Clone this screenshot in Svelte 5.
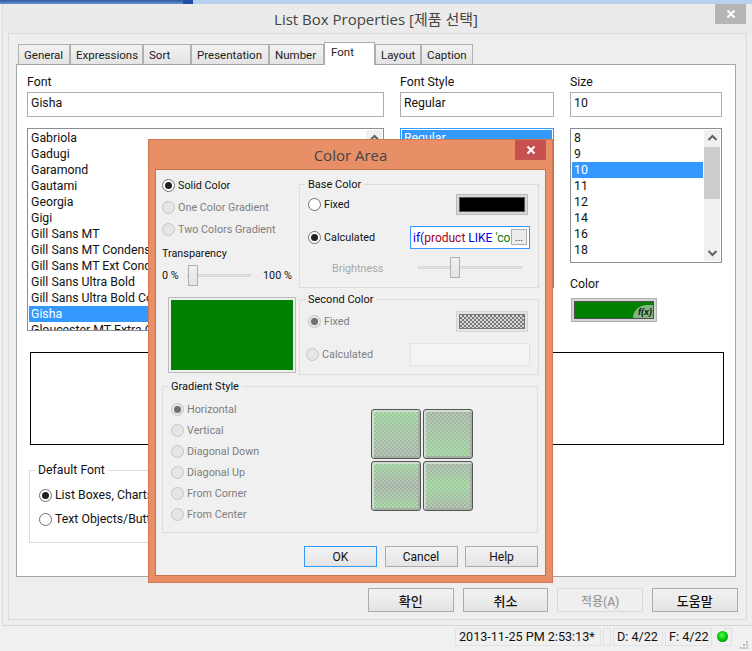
<script>
  const tabs = [
    { label: 'General', w: 52 }, { label: 'Expressions', w: 73 }, { label: 'Sort', w: 48 },
    { label: 'Presentation', w: 78 }, { label: 'Number', w: 55 }, { label: 'Font', w: 51, active: true },
    { label: 'Layout', w: 46 }, { label: 'Caption', w: 52 }
  ];
  const fonts = ['Gabriola','Gadugi','Garamond','Gautami','Georgia','Gigi','Gill Sans MT','Gill Sans MT Condensed','Gill Sans MT Ext Condensed Bold','Gill Sans Ultra Bold','Gill Sans Ultra Bold Condensed','Gisha','Gloucester MT Extra Condensed'];
  const sizes = [8,9,10,11,12,14,16,18];
  const gradients = ['Horizontal','Vertical','Diagonal Down','Diagonal Up','From Corner','From Center'];
</script>

<div class="screen">
  <div class="topstrip"><span class="strip-a"></span><span class="strip-b"></span></div>
  <div class="window">
    <header class="wintitle">
      <span>List Box Properties [제품 선택]</span>
      <button class="winclose" aria-label="Close"><svg width="10" height="10" viewBox="0 0 10 10"><path d="M1.5 1.5l7 7M8.5 1.5l-7 7" stroke="#fff" stroke-width="2"/></svg></button>
    </header>
    <div class="frame">
      <div class="tabs">
        {#each tabs as t}
          <div class="tab" class:active={t.active} style="width:{t.w}px">{t.label}</div>
        {/each}
      </div>
      <div class="panel">
        <div class="fontgrid">
          <div class="col">
            <div class="lbl">Font</div>
            <div class="input">Gisha</div>
            <div class="list fontlist">
              {#each fonts as f}
                <div class="opt" class:sel={f === 'Gisha'}>{f}</div>
              {/each}
              <div class="vscroll"><svg class="chev" width="13" height="8" viewBox="0 0 13 8"><path d="M2.5 6l4-4 4 4" fill="none" stroke="#606060" stroke-width="2"/></svg></div>
            </div>
          </div>
          <div class="col">
            <div class="lbl">Font Style</div>
            <div class="input">Regular</div>
            <div class="list stylelist"><div class="opt sel">Regular</div></div>
          </div>
          <div class="col">
            <div class="lbl">Size</div>
            <div class="input">10</div>
            <div class="list sizelist">
              {#each sizes as s}
                <div class="opt" class:sel={s === 10}>{s}</div>
              {/each}
              <div class="vscroll full">
                <svg class="chev" width="13" height="8" viewBox="0 0 13 8"><path d="M2.5 6l4-4 4 4" fill="none" stroke="#606060" stroke-width="2"/></svg>
                <span class="thumb"></span>
                <svg class="chev bottom" width="13" height="8" viewBox="0 0 13 8"><path d="M2.5 2l4 4 4-4" fill="none" stroke="#606060" stroke-width="2"/></svg>
              </div>
            </div>
            <div class="lbl colorlbl">Color</div>
            <div class="colorbtn"><div class="colorfill"><span class="fx">f(x)</span></div></div>
          </div>
        </div>
        <div class="preview"></div>
        <fieldset class="defaultfont">
          <legend>Default Font</legend>
          <div class="rrow"><span class="radio on"></span>List Boxes, Charts, etc.</div>
          <div class="rrow"><span class="radio"></span>Text Objects/Buttons</div>
        </fieldset>
      </div>
      <div class="actions">
        <button class="kbtn">확인</button>
        <button class="kbtn">취소</button>
        <button class="kbtn off">적용(A)</button>
        <button class="kbtn">도움말</button>
      </div>
    </div>
  </div>
  <footer class="status">
    <div class="cell time">2013-11-25 PM 2:53:13*</div>
    <div class="cell blank"></div>
    <div class="cell d">D: 4/22</div>
    <div class="cell f">F: 4/22</div>
    <div class="cell blank2"></div>
    <div class="led"></div>
    <svg class="grip" width="10" height="10" viewBox="0 0 10 10"><g fill="#bdbdbd"><rect x="7" y="1" width="2" height="2"/><rect x="4" y="4" width="2" height="2"/><rect x="7" y="4" width="2" height="2"/><rect x="1" y="7" width="2" height="2"/><rect x="4" y="7" width="2" height="2"/><rect x="7" y="7" width="2" height="2"/></g></svg>
  </footer>

  <section class="dialog">
    <header class="dtitle">
      <span>Color Area</span>
      <button class="dclose" aria-label="Close"><svg width="10" height="10" viewBox="0 0 10 10"><path d="M1.5 1.5l7 7M8.5 1.5l-7 7" stroke="#fff" stroke-width="2"/></svg></button>
    </header>
    <div class="client">
      <div class="upper">
        <div class="leftcol">
          <div class="drow"><span class="radio on"></span>Solid Color</div>
          <div class="drow dim"><span class="radio dis"></span>One Color Gradient</div>
          <div class="drow dim"><span class="radio dis"></span>Two Colors Gradient</div>
          <div class="translbl">Transparency</div>
          <div class="transrow">
            <span class="zero">0 %</span>
            <div class="slider small"><i></i></div>
            <span class="hundred">100 %</span>
          </div>
          <div class="bigcolor"><div></div></div>
        </div>
        <div class="rightcol">
          <fieldset class="grp base">
            <legend>Base Color</legend>
            <div class="bc-row first">
              <div class="rrow2"><span class="radio"></span>Fixed</div>
              <div class="swatch black"><div></div></div>
            </div>
            <div class="bc-row second">
              <div class="rrow2"><span class="radio on"></span>Calculated</div>
              <div class="expr"><span class="clip"><b class="bl">if(</b><b class="re">product</b> <b class="bl">LIKE</b> <b class="gr">'co</b></span><span class="dots">...</span></div>
            </div>
            <div class="bc-row third">
              <span class="bright">Brightness</span>
              <div class="slider wide"><i></i></div>
            </div>
          </fieldset>
          <fieldset class="grp second-c">
            <legend>Second Color</legend>
            <div class="bc-row first2">
              <div class="rrow2 dim"><span class="radio disdot"></span>Fixed</div>
              <div class="swatch checker"><div></div></div>
            </div>
            <div class="bc-row second2">
              <div class="rrow2 dim left2"><span class="radio dis"></span>Calculated</div>
              <div class="expr disabled"></div>
            </div>
          </fieldset>
        </div>
      </div>
      <fieldset class="grp gradient">
        <legend>Gradient Style</legend>
        <div class="gradbody">
          <div class="gradlist">
            {#each gradients as g, i}
              <div class="grow dim"><span class="radio {i === 0 ? 'disdot' : 'dis'}"></span>{g}</div>
            {/each}
          </div>
          <div class="tiles">
            <div class="tile t1"></div><div class="tile t2"></div>
            <div class="tile t3"></div><div class="tile t4"></div>
          </div>
        </div>
      </fieldset>
      <div class="dactions">
        <button class="dbtn def">OK</button>
        <button class="dbtn">Cancel</button>
        <button class="dbtn">Help</button>
      </div>
    </div>
  </section>
</div>

<style>
  :global(body) { margin: 0; background: #f0f0f0; }
  * { box-sizing: border-box; }
  .screen { position: relative; width: 752px; height: 651px; overflow: hidden; background: #efefef;
    font-family: Roboto, "Noto Sans CJK KR", sans-serif; font-size: 12px; color: #111; }
  button { font: inherit; color: inherit; padding: 0; }

  .topstrip { height: 4px; background: #b9d1f1; display: flex; }
  .strip-a { width: 183px; background: linear-gradient(#2a5aa0, #6d93c9); }
  .strip-b { width: 10px; background: #1f4fa8; }

  .window { height: 622px; margin-left: 2px; background: #eeeeee; border-left: 1px solid #dcdcdc; border-bottom: 1px solid #d6d6d6; }
  .wintitle { height: 29px; position: relative; display: flex; justify-content: center; align-items: center;
    font-family: "Open Sans", "Noto Sans CJK KR", sans-serif; font-size: 15px; color: #444; padding-right: 3px; background: #ebebeb; }
  .winclose { position: absolute; right: 6px; top: 0; width: 31px; height: 20px; background: #b5b5b5; border: 0; display: grid; place-items: center; }

  .frame { margin-left: 5px; margin-right: 5px; height: 587px; border: 1px solid #dadada; padding: 9px 0 0 7px; background: #eeeeee; }
  .tabs { display: flex; height: 22px; align-items: flex-end; padding-left: 2px; position: relative; z-index: 1; margin-bottom: -1px; }
  .tab { height: 21px; border: 1px solid #b0b0b0; border-bottom-color: #a0a0a0; background: linear-gradient(#f2f2f2, #e3e3e3);
    display: flex; align-items: center; padding-left: 5px; color: #222; font-size: 11.5px; }
  .tab.active { height: 23px; background: #fff; border-color: #ababab; border-bottom: 0; padding-bottom: 4px; padding-left: 6px; }
  .panel { width: 720px; height: 513px; background: #fff; border: 1px solid #a5a5a5; padding: 9px 0 0 10px; }

  .fontgrid { display: grid; grid-template-columns: 357px 154px 152px; column-gap: 16px; height: 261px; }
  .col { display: flex; flex-direction: column; }
  .lbl { height: 18px; line-height: 16px; font-size: 12.3px; }
  .input { height: 25px; border: 1px solid #adadad; padding: 3px 0 0 3px; margin-bottom: 11px; font-size: 12.3px; background: #fff; }
  .list { border: 1px solid #8a8e96; background: #fff; position: relative; overflow: hidden; padding: 1px; }
  .fontlist { height: 203px; }
  .stylelist { height: 160px; border-color: #3399ff; }
  .sizelist { height: 135px; }
  .opt { height: 16px; line-height: 16px; padding-left: 2px; white-space: nowrap; font-size: 12.3px; }
  .opt.sel { background: #3399ff; color: #fff; }
  .sizelist .opt { margin-right: 17px; }
  .vscroll { position: absolute; right: 1px; top: 1px; bottom: 1px; width: 16px; background: #f0f0f0; }
  .thumb { position: absolute; left: 0; right: 0; top: 17px; height: 52px; background: #cdcdcd; }
  .chev { position: absolute; top: 4px; left: 2px; }
  .chev.bottom { top: auto; bottom: 4px; }
  .colorlbl { margin-top: 12px; height: 23px; padding-top: 1px; }
  .colorbtn { width: 86px; height: 24px; margin-left: 1px; border: 1px solid #b0b0b0; background: #d4d4d4; padding: 2px; }
  .colorfill { height: 100%; background: #008000; border: 1px solid #505050; position: relative; overflow: hidden; }
  .fx { position: absolute; right: 0; bottom: -1px; width: 20px; height: 14px; border-top-left-radius: 14px 13px; background: #80b880;
    font: italic bold 9px "Liberation Sans", sans-serif; color: #111; text-align: right; line-height: 14px; padding-right: 1px; }

  .preview { margin: 17px 0 0 3px; width: 694px; height: 93px; border: 1px solid #000; }
  .defaultfont { margin: 17px 0 0 2px; width: 300px; height: 81px; padding: 0 0 0 9px; border: 1px solid #dcdcdc; }
  legend { padding: 0 3px; font-size: 12.3px; line-height: 16px; }
  .defaultfont legend { margin-left: -4px; }
  .rrow { display: flex; align-items: center; gap: 3px; height: 24px; font-size: 12.3px; white-space: nowrap; }
  .rrow:first-of-type { margin-top: 5px; }

  .radio { width: 13px; height: 13px; flex: none; border-radius: 50%; border: 1px solid #707070; background: #fff; position: relative; display: inline-block; }
  .radio.on::after { content: ""; position: absolute; inset: 2px; border-radius: 50%; background: #222; }
  .radio.dis { background: #e6e6e6; border-color: #c4c4c4; }
  .radio.disdot { background: #e6e6e6; border-color: #c4c4c4; }
  .radio.disdot::after { content: ""; position: absolute; inset: 2px; border-radius: 50%; background: #707070; }
  .dim { color: #7e7e7e; }

  .actions { display: flex; padding: 11px 0 0 352px; gap: 9.2px; }
  .kbtn { width: 85.5px; height: 24px; border: 1px solid #acacac; background: linear-gradient(#f2f2f2, #e4e4e4); font-size: 13px; font-weight: 500; }
  .kbtn.off { border-color: #d9d9d9; color: #9a9a9a; background: #efefef; font-size: 12px; }

  .status { height: 25px; display: flex; align-items: flex-start; background: #f0f0f0; padding: 2px 0 0 455px; gap: 2px; position: relative; font-size: 12.6px; }
  .cell { height: 18px; border: 1px solid #e2e2e2; line-height: 16px; padding-left: 3px; white-space: nowrap; }
  .time { width: 146px; }
  .blank { width: 8px; }
  .d { width: 50px; }
  .f { width: 47px; }
  .blank2 { width: 8px; margin-left: 10px; }
  .led { position: absolute; left: 717px; top: 5px; width: 11px; height: 11px; border-radius: 50%; background: radial-gradient(circle at 45% 40%, #4dff4d 0, #00c000 55%, #006000 100%); }
  .grip { position: absolute; right: 3px; bottom: 1px; }

  .dialog { position: absolute; left: 148px; top: 139px; width: 405px; height: 444px; background: #e98f67; border: 1px solid #d07a55; }
  .dtitle { height: 29px; position: relative; display: flex; justify-content: center; align-items: center;
    font-family: "Open Sans", sans-serif; font-size: 15px; color: #444; padding-top: 1px; }
  .dclose { position: absolute; right: 6px; top: 0; width: 31px; height: 20px; background: #c75050; border: 0; display: grid; place-items: center; }
  .client { margin: 0 6px; height: 407px; background: #f0f0f0; border: 1px solid #c9714e; padding: 0 0 0 6px; font-size: 10.8px; }

  .upper { display: flex; }
  .leftcol { width: 137px; padding-top: 4px; }
  .drow { display: flex; align-items: center; gap: 3px; height: 22px; white-space: nowrap; }
  .translbl { height: 18px; margin-top: 5px; line-height: 18px; }
  .transrow { display: flex; align-items: center; height: 25px; }
  .zero { width: 25px; flex: none; }
  .hundred { margin-left: 12px; white-space: nowrap; }
  .slider { position: relative; height: 3px; background: #e3e3e3; border: 1px solid #d6d6d6; flex: none; }
  .slider i { position: absolute; top: -10px; width: 10px; height: 21px; background: linear-gradient(#f0f0f0, #e4e4e4); border: 1px solid #b0b0b0; }
  .slider.small { width: 64px; }
  .slider.small i { left: 0; }
  .slider.wide { width: 104px; }
  .slider.wide i { left: 31px; }
  .bigcolor { margin: 9px 0 0 6px; width: 128px; height: 76px; border: 1px solid #bcbcbc; padding: 2px; }
  .bigcolor div { height: 100%; background: #008000; }

  .rightcol { width: 240px; display: flex; flex-direction: column; padding-top: 6px; }
  .grp { margin: 0; border: 1px solid #dcdcdc; padding: 0; position: relative; min-width: 0; }
  .grp legend { margin-left: 5px; font-size: 11px; position: relative; top: 1px; }
  .base { height: 112px; }
  .second-c { height: 84px; margin-top: 3px; }
  .bc-row { display: flex; align-items: center; justify-content: space-between; padding-left: 8px; }
  .first { height: 21px; margin-top: 2px; padding-right: 10px; }
  .second { height: 23px; margin-top: 11px; padding-right: 8px; }
  .third { height: 22px; margin-top: 7px; padding: 0 16px 0 32px; }
  .first2 { height: 21px; margin-top: 4px; padding-right: 10px; }
  .second2 { height: 23px; margin-top: 11px; padding-left: 6px; padding-right: 8px; }
  .rrow2 { display: flex; align-items: center; gap: 3px; }
  .bright { color: #a8a8a8; padding-top: 2px; }
  .swatch { width: 72px; height: 21px; background: #d8d8d8; border: 1px solid #bcbcbc; padding: 2px; }
  .swatch div { height: 100%; border: 1px solid #555; }
  .black div { background: #000; }
  .checker { background: #e4e4e4; border-color: #d4d4d4; }
  .checker div { background: repeating-conic-gradient(#777 0 25%, #d8d8d8 0 50%) 0 0 / 4px 4px; border-color: #777; }
  .expr { width: 120px; height: 23px; border: 1px solid #3399ff; background: #fff; position: relative; display: flex; align-items: center; padding-left: 2px; overflow: hidden; font-size: 12px; white-space: nowrap; }
  .clip b { font-weight: 400; }
  .bl { color: #0000e8; } .re { color: #a00020; } .gr { color: #0a7a0a; }
  .dots { position: absolute; right: 2px; top: 2px; width: 16px; height: 16px; background: #ececec; border: 1px solid #acacac; font-size: 10px; line-height: 16px; text-align: center; color: #222; }
  .expr.disabled { border: 1px solid #e2e2e2; background: #f4f4f4; }

  .gradient { width: 376px; height: 155px; margin-top: 3px; }
  .gradbody { display: flex; justify-content: space-between; padding: 5px 64px 0 8px; }
  .grow { display: flex; align-items: center; gap: 3px; height: 21px; }
  .tiles { display: grid; grid-template-columns: 50px 50px; grid-template-rows: 50px 50px; gap: 2px; margin-top: 10px; }
  .tile { border: 1px solid #555; border-radius: 3px; box-shadow: inset 1px 1px 0 1px #cfdccf, inset -1px -1px 0 1px #a4b0a4; }
  .t1 { background: repeating-conic-gradient(#eee0 0 25%, #f0f0f04d 0 50%) 0 0 / 4px 4px, linear-gradient(#98d098, #a2b0a2); }
  .t2 { background: repeating-conic-gradient(#eee0 0 25%, #f0f0f04d 0 50%) 0 0 / 4px 4px, linear-gradient(#a2b0a2, #98d098); }
  .t3 { background: repeating-conic-gradient(#eee0 0 25%, #f0f0f04d 0 50%) 0 0 / 4px 4px, linear-gradient(#98d098, #a2b0a2, #98d098); }
  .t4 { background: repeating-conic-gradient(#eee0 0 25%, #f0f0f04d 0 50%) 0 0 / 4px 4px, linear-gradient(#a2b0a2, #98d098, #a2b0a2); }
  .dactions { display: flex; justify-content: flex-end; gap: 7.5px; padding: 13px 7px 0 0; }
  .dbtn { width: 73px; height: 21px; border: 1px solid #acacac; background: linear-gradient(#f2f2f2, #e4e4e4); font-size: 12px; }
  .dbtn.def { border-color: #3399ff; }
</style>
